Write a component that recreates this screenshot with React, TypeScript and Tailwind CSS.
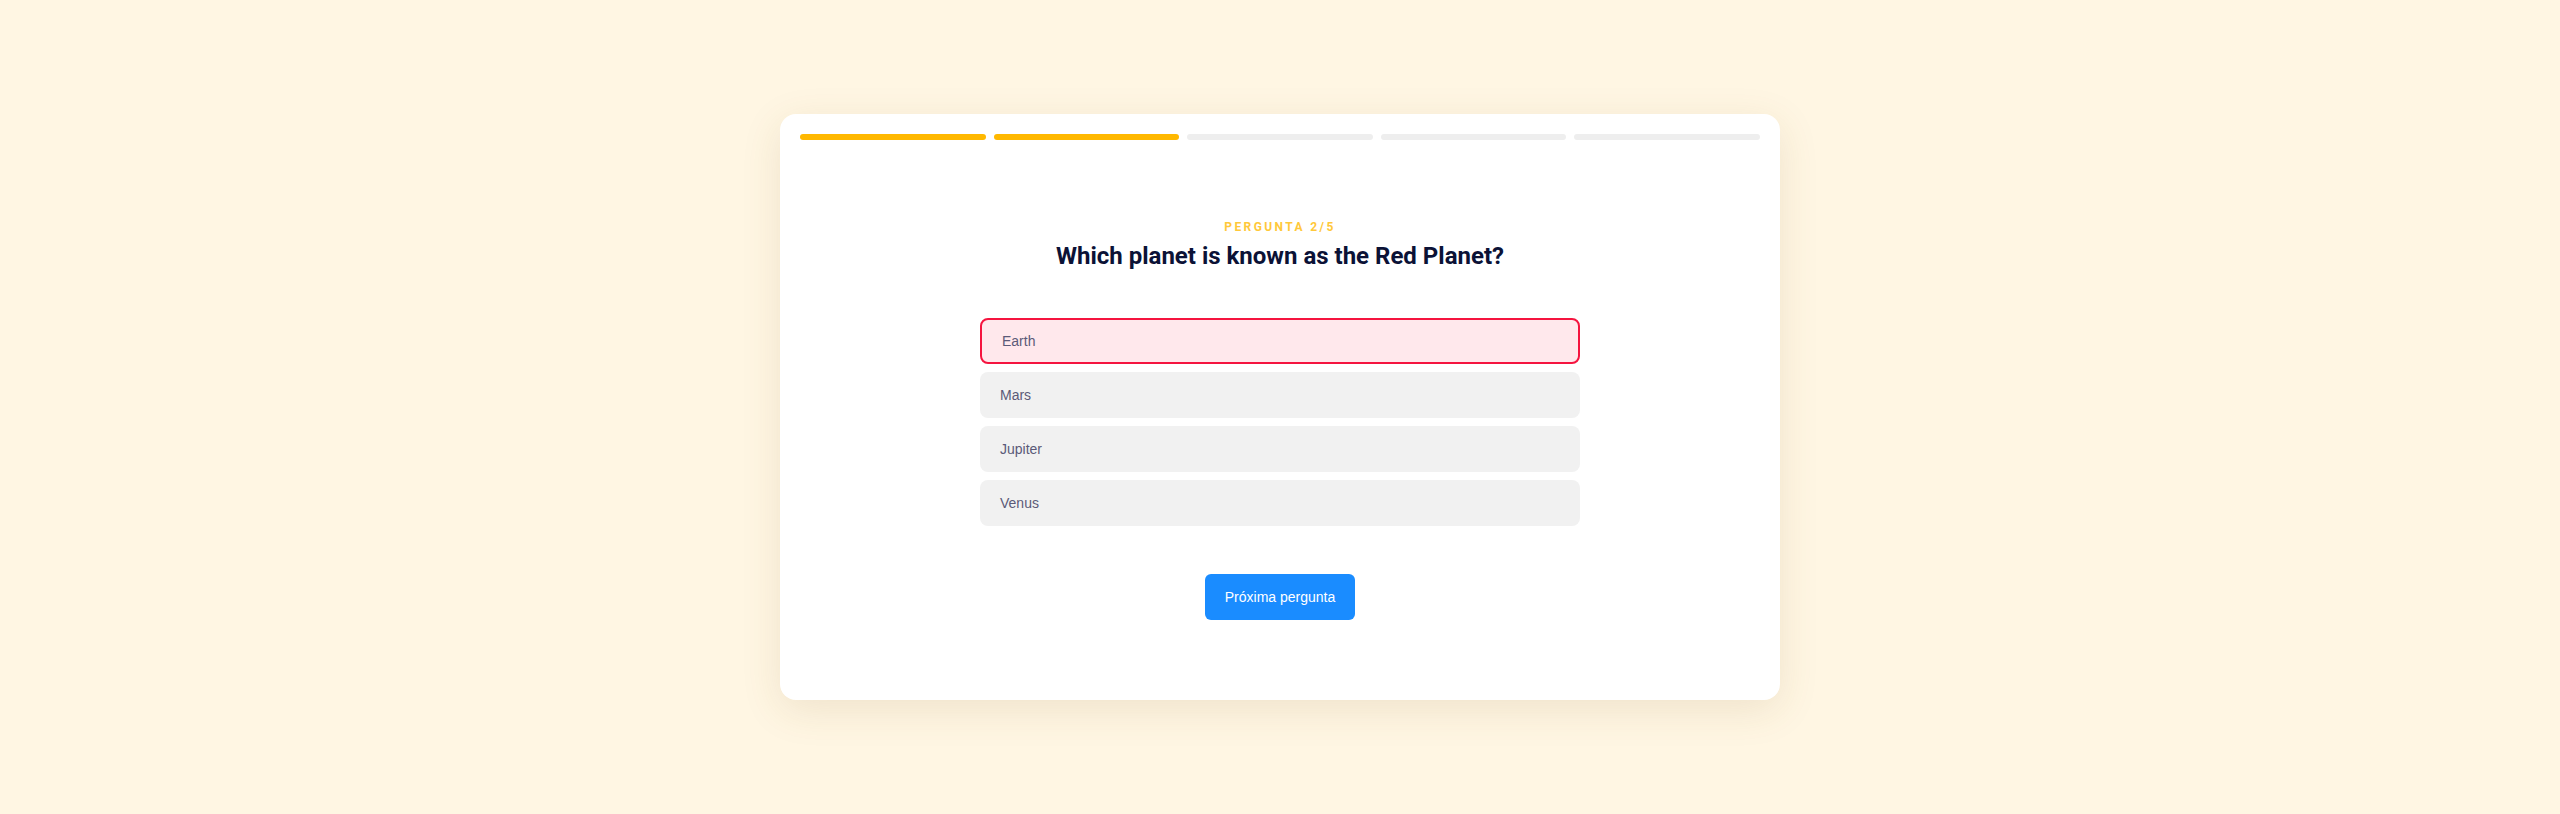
import React from "react";

const options = ["Earth", "Mars", "Jupiter", "Venus"];

const App = () => {
  const current = 2;
  const total = 5;
  const selected = "Earth";

  return (
    <div className="min-h-screen w-full bg-[#fff6e3] flex items-center justify-center">
      <div className="w-[1000px] bg-white rounded-2xl shadow-[0_10px_40px_rgba(120,90,30,0.12)] px-5 pt-5 pb-20">
        {/* progress start */}
        <div className="flex gap-2">
          {Array.from({ length: total }).map((_, i) => (
            <div
              key={i}
              className={`flex-1 h-1.5 rounded-full ${
                i < current ? "bg-[#ffb800]" : "bg-[#eeeeee]"
              }`}
            ></div>
          ))}
        </div>
        {/* progress end */}

        <div className="mt-[79px] flex flex-col items-center font-['Roboto',sans-serif]">
          <div className="text-[12px] leading-4 font-bold tracking-[0.2em] text-[#ffc83a]">
            PERGUNTA {current}/{total}
          </div>
          <h1 className="mt-[5px] text-[24px] leading-8 font-bold text-[#0b1236]">
            Which planet is known as the Red Planet?
          </h1>
        </div>

        <div className="mt-[46px] mx-auto w-[600px] flex flex-col gap-2 font-['Liberation_Sans',Arial,sans-serif]">
          {options.map((opt) => (
            <button
              key={opt}
              className={`h-[46px] w-full text-left rounded-lg text-[14px] text-[#5b5a78] ${
                opt === selected
                  ? "bg-[#ffe8ec] border-2 border-[#f5143f] px-5"
                  : "bg-[#f1f1f1] px-5"
              }`}
            >
              {opt}
            </button>
          ))}
        </div>

        <div className="mt-12 flex justify-center font-['Liberation_Sans',Arial,sans-serif]">
          <button className="h-[46px] w-[150px] rounded-md bg-[#1a8cff] text-white text-[14px]">
            Próxima pergunta
          </button>
        </div>
      </div>
    </div>
  );
};

export default App;
